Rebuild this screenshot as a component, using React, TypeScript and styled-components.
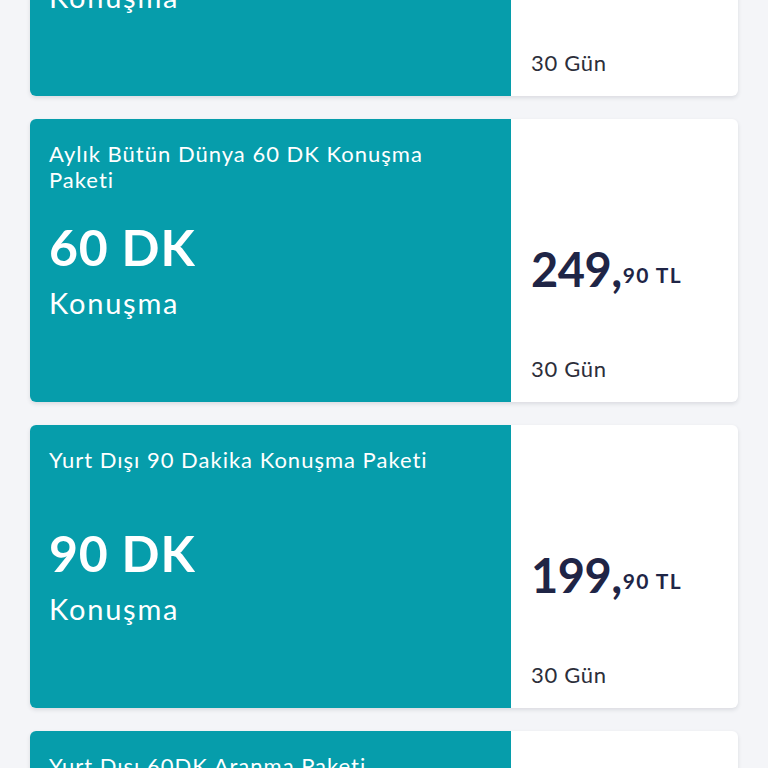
import React from "react";
import styled, { createGlobalStyle } from "styled-components";

const colors = {
  page: "#f4f5f8",
  teal: "#069dab",
  navy: "#1f2546",
  text: "#2c2e3a",
};

const GlobalStyle = createGlobalStyle`
  html, body {
    margin: 0;
    padding: 0;
    background: ${colors.page};
    overflow: hidden;
  }
  body {
    font-family: Lato, "Noto Sans", "DejaVu Sans", sans-serif;
  }
`;

interface PackageItem {
  title: string;
  amount: string;
  unit: string;
  price: string;
  cents: string;
  days: string;
}

const packages: PackageItem[] = [
  { title: "Yurt Dışı 30 Dakika Konuşma Paketi", amount: "30 DK", unit: "Konuşma", price: "149", cents: "90", days: "30 Gün" },
  { title: "Aylık Bütün Dünya 60 DK Konuşma Paketi", amount: "60 DK", unit: "Konuşma", price: "249", cents: "90", days: "30 Gün" },
  { title: "Yurt Dışı 90 Dakika Konuşma Paketi", amount: "90 DK", unit: "Konuşma", price: "199", cents: "90", days: "30 Gün" },
  { title: "Yurt Dışı 60DK Aranma Paketi", amount: "60 DK", unit: "Konuşma", price: "179", cents: "90", days: "30 Gün" },
];

// list is scrolled, first card only partly visible
const List = styled.div`
  display: flex;
  flex-direction: column;
  gap: 23px;
  padding: 0 30px;
  margin-top: -187px;
`;

const Card = styled.div`
  display: flex;
  height: 283px;
  border-radius: 6px;
  overflow: hidden;
  background: #fff;
  box-shadow: 0 2px 4px rgba(30, 40, 60, 0.12);
`;

const Info = styled.div`
  flex: 0 0 481px;
  display: flex;
  flex-direction: column;
  padding: 22px 19px 0;
  box-sizing: border-box;
  background: ${colors.teal};
  color: #fff;
`;

const Title = styled.div`
  font-size: 22px;
  line-height: 26px;
  letter-spacing: 1px;
  min-height: 52px;
  max-width: 410px;
`;

const Amount = styled.div`
  margin-top: 25px;
  font-size: 50px;
  line-height: 58px;
  font-weight: 700;
  letter-spacing: 0.8px;
`;

const Unit = styled.div`
  margin-top: 9px;
  font-size: 29px;
  line-height: 35px;
  letter-spacing: 1.8px;
`;

const PriceCol = styled.div`
  flex: 1;
  display: grid;
  grid-template-rows: 1fr auto;
  padding: 0 20px 20px;
`;

const Price = styled.div`
  padding-top: 123px;
  display: flex;
  align-items: baseline;
  color: ${colors.navy};
  font-weight: 700;
`;

const Main = styled.span`
  font-size: 47px;
  line-height: 55px;
  letter-spacing: -0.5px;
`;

const Fraction = styled.span`
  font-size: 21px;
  letter-spacing: 1.4px;
  position: relative;
  top: -4px;
  margin-left: 1px;
`;

const Days = styled.div`
  font-size: 22px;
  line-height: 26px;
  letter-spacing: 0.7px;
  color: ${colors.text};
`;

const PackageCard: React.FC<{ item: PackageItem }> = ({ item }) => (
  <Card>
    <Info>
      <Title>{item.title}</Title>
      <Amount>{item.amount}</Amount>
      <Unit>{item.unit}</Unit>
    </Info>
    <PriceCol>
      <Price>
        <Main>{item.price},</Main>
        <Fraction>{item.cents} TL</Fraction>
      </Price>
      <Days>{item.days}</Days>
    </PriceCol>
  </Card>
);

export default function App() {
  return (
    <>
      <GlobalStyle />
      <List>
        {packages.map((p, i) => (
          <PackageCard key={i} item={p} />
        ))}
      </List>
    </>
  );
}
